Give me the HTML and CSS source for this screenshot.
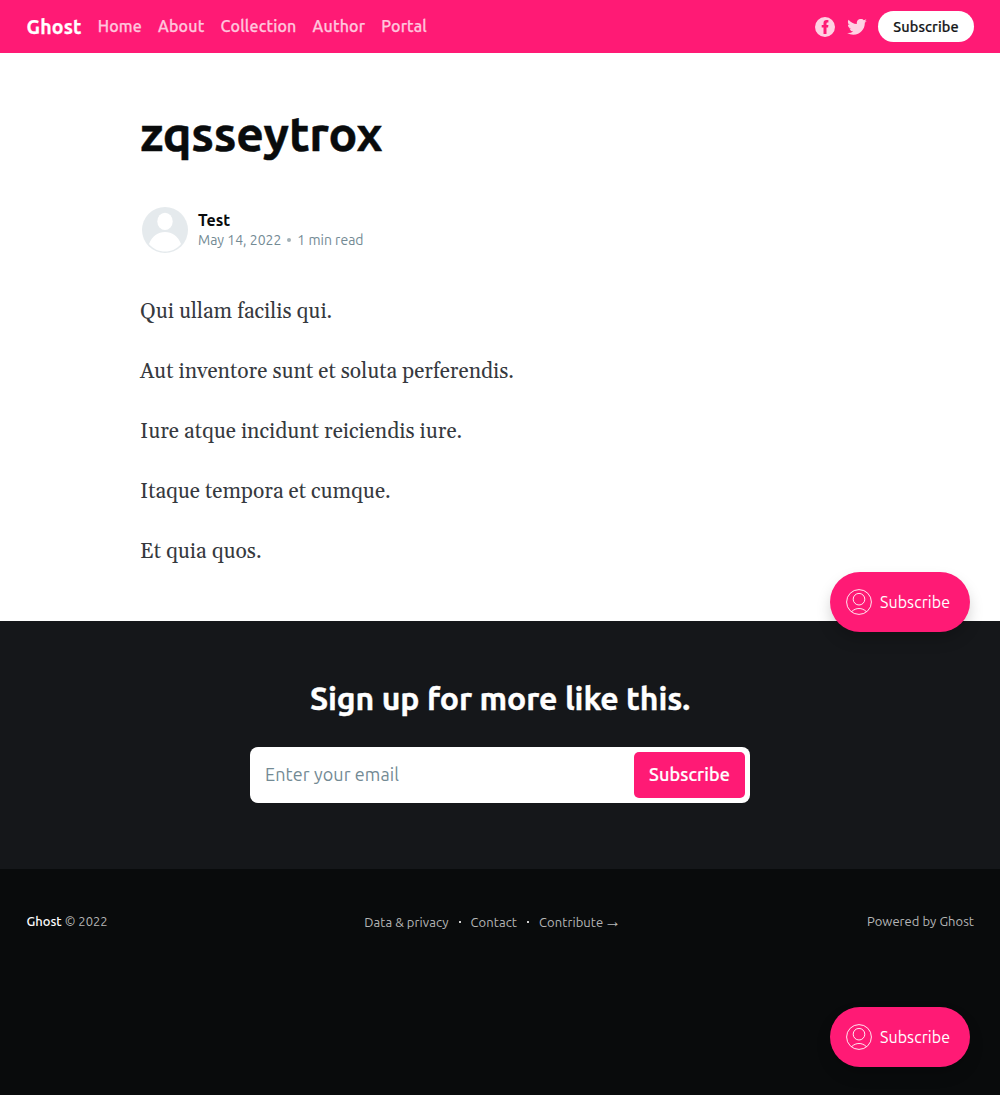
FILE: index.html
```html
<!DOCTYPE html>
<html lang="en">
<head>
<meta charset="utf-8">
<title>zqsseytrox</title>
<link rel="stylesheet" href="styles.css">
</head>
<body>
<header class="head">
  <nav class="head-nav">
    <a class="logo">Ghost</a>
    <a>Home</a>
    <a>About</a>
    <a>Collection</a>
    <a>Author</a>
    <a>Portal</a>
  </nav>
  <div class="head-actions">
    <svg class="facebook" viewBox="0 0 20 20"><path fill-rule="evenodd" d="M10 0a10 10 0 1 0 0 20a10 10 0 0 0 0-20zM8.500 17V10.500H6.700V8H8.500V6.300C8.500 4.200 9.600 3.100 11.500 3.100H13.400V5.600H12.300C11.700 5.600 11.500 5.900 11.500 6.500V8H13.400L13.100 10.500H11.500V17z"/></svg>
    <svg class="twitter" viewBox="0 2.900 24 19.500"><path d="M24 5.100a9.800 9.800 0 0 1-2.800.8 4.900 4.900 0 0 0 2.200-2.700 9.800 9.800 0 0 1-3.100 1.200 4.900 4.900 0 0 0-8.400 4.500A14 14 0 0 1 1.700 3.700a4.900 4.900 0 0 0 1.500 6.500A4.900 4.900 0 0 1 1 9.600a4.900 4.900 0 0 0 3.900 4.900 4.900 4.900 0 0 1-2.200.1 4.900 4.900 0 0 0 4.600 3.400A9.900 9.900 0 0 1 0 20a13.900 13.900 0 0 0 7.500 2.200c9.100 0 14.300-7.700 14-14.600A10 10 0 0 0 24 5.100z"/></svg>
    <a class="head-button">Subscribe</a>
  </div>
</header>
<main class="article">
  <h1>zqsseytrox</h1>
  <div class="byline">
    <svg class="avatar" viewBox="0 0 46 46"><circle cx="23" cy="23" r="23" fill="#e5eaed"/><ellipse cx="23" cy="14.400" rx="7.700" ry="8.700" fill="#fff"/><path fill="#fff" d="M7 37C10 29 16 25 23 25s13 4 16 12c-4 5-10 7.500-16 7.500s-12-2.500-16-7.500z"/></svg>
    <div>
      <div class="author">Test</div>
      <div class="meta"><span>May 14, 2022</span><i class="bull"></i><span>1 min read</span></div>
    </div>
  </div>
  <div class="content">
    <p>Qui ullam facilis qui.</p>
    <p>Aut inventore sunt et soluta perferendis.</p>
    <p>Iure atque incidunt reiciendis iure.</p>
    <p>Itaque tempora et cumque.</p>
    <p>Et quia quos.</p>
  </div>
</main>
<section class="signup">
  <h2>Sign up for more like this.</h2>
  <div class="field"><span class="placeholder">Enter your email</span><a class="field-button">Subscribe</a></div>
</section>
<footer class="foot">
  <div class="copyright"><b>Ghost</b> © 2022</div>
  <nav class="foot-nav"><a>Data &amp; privacy</a><i></i><a>Contact</a><i></i><a>Contribute <span class="arrow">→</span></a></nav>
  <div class="powered">Powered by Ghost</div>
</footer>
<a class="portal portal-upper"><svg viewBox="0 0 26 26"><circle cx="13" cy="13" r="12.400"/><circle cx="13" cy="10.200" r="5.800"/><path d="M5.500 22.700C8 20.400 10.400 19.500 13 19.500s5 .9 7.500 3.200"/></svg>Subscribe</a>
<a class="portal portal-lower"><svg viewBox="0 0 26 26"><circle cx="13" cy="13" r="12.400"/><circle cx="13" cy="10.200" r="5.800"/><path d="M5.500 22.700C8 20.400 10.400 19.500 13 19.500s5 .9 7.500 3.200"/></svg>Subscribe</a>
</body>
</html>
```

FILE: styles.css
```css
* { box-sizing: border-box; }
body {
  margin: 0;
  min-height: 1095px;
  display: flex;
  flex-direction: column;
  background: #fff;
  color: #090b0c;
  font-family: Ubuntu, "Noto Sans", sans-serif;
  position: relative;
}
h1, h2, p { margin: 0; }
svg { display: block; flex: none; }
.head {
  height: 53px;
  padding: 0 26px;
  background: #ff1a75;
  color: #fff;
  display: flex;
  justify-content: space-between;
  align-items: center;
}
.head-nav { display: flex; align-items: center; gap: 16px; padding: 0 0 2px .5px; font-size: 16px; font-weight: 500; letter-spacing: .18px; color: #ffc6dd; -webkit-text-stroke: .25px; }
.logo { font-size: 19.500px; line-height: 23px; padding-top: 3px; font-weight: 700; color: #fff; }
.head-actions { display: flex; align-items: center; }
.head-actions svg { fill: #ffd1e3; }
.facebook { width: 20px; height: 20px; margin-right: 12px; }
.twitter { width: 20px; height: 16px; margin-right: 11px; }
.head-button {
  width: 96px; height: 31px; border-radius: 16px; background: #fff; color: #15171a;
  display: flex; align-items: center; justify-content: center;
  font-size: 14.500px; font-weight: 500; letter-spacing: .1px; -webkit-text-stroke: .2px;
}
.article { width: 720px; height: 568px; margin: 0 auto; padding-top: 53px; }
h1 { font-size: 48px; line-height: 54px; font-weight: 700; letter-spacing: -.2px; -webkit-text-stroke: .5px; }
.byline { display: flex; align-items: center; gap: 10px; margin: 47px 0 0 2px; height: 46px; }
.avatar { width: 46px; height: 46px; }
.author { font-size: 16px; line-height: 20px; font-weight: 700; }
.meta { display: flex; align-items: center; font-size: 14px; line-height: 20px; color: #738a94; }
.bull { width: 4px; height: 4px; border-radius: 50%; background: #a3b1b8; margin: 0 6px; }
.content { margin-top: 43px; font: 21px/32px Gelasio, Georgia, "Liberation Serif", serif; color: #36393e; }
.content p { margin-bottom: 28px; }
.signup { height: 248px; padding-top: 55px; background: #15171a; color: #fff; display: flex; flex-direction: column; align-items: center; }
h2 { font-size: 32px; line-height: 44px; font-weight: 700; letter-spacing: -.08px; -webkit-text-stroke: .4px; }
.field { width: 500px; height: 56px; margin-top: 27px; padding: 5px 5px 5px 15px; border-radius: 8px; background: #fff; color: #738a94; font-size: 18px; letter-spacing: .1px; display: flex; align-items: center; justify-content: space-between; }
.placeholder { padding-bottom: 2px; }
.field-button { width: 111px; height: 46px; padding-bottom: 2px; border-radius: 5px; background: #ff1a75; color: #fff; font-weight: 500; -webkit-text-stroke: .2px; display: flex; align-items: center; justify-content: center; }
.foot { height: 226px; padding: 43px 26px 0; background: #090b0c; color: #b5b6b6; font-size: 13px; line-height: 20px; display: flex; justify-content: space-between; }
.foot b { color: #fff; font-weight: 500; }
.copyright, .powered { margin-top: -1px; }
.copyright { padding-left: .5px; }
.foot-nav { display: flex; margin-left: 11px; letter-spacing: .08px; }
.foot-nav i { width: 2px; height: 2px; margin: 9px 10px; background: #d0d0d0; }
.arrow { font-family: "Liberation Sans", sans-serif; font-size: 17px; margin-left: -2px; line-height: 1; }
.powered { letter-spacing: .04px; }
.portal { position: absolute; left: 830px; width: 140px; height: 60px; padding-left: 16px; border-radius: 30px; background: #ff1a75; color: #fff; display: flex; align-items: center; gap: 8px; font-size: 16px; letter-spacing: .08px; box-shadow: 0 8px 16px -2px rgba(0,0,0,.22); }
.portal svg { width: 26px; height: 26px; fill: none; stroke: #fff; stroke-width: .9; }
.portal-upper { top: 572px; }
.portal-lower { top: 1007px; }
```
